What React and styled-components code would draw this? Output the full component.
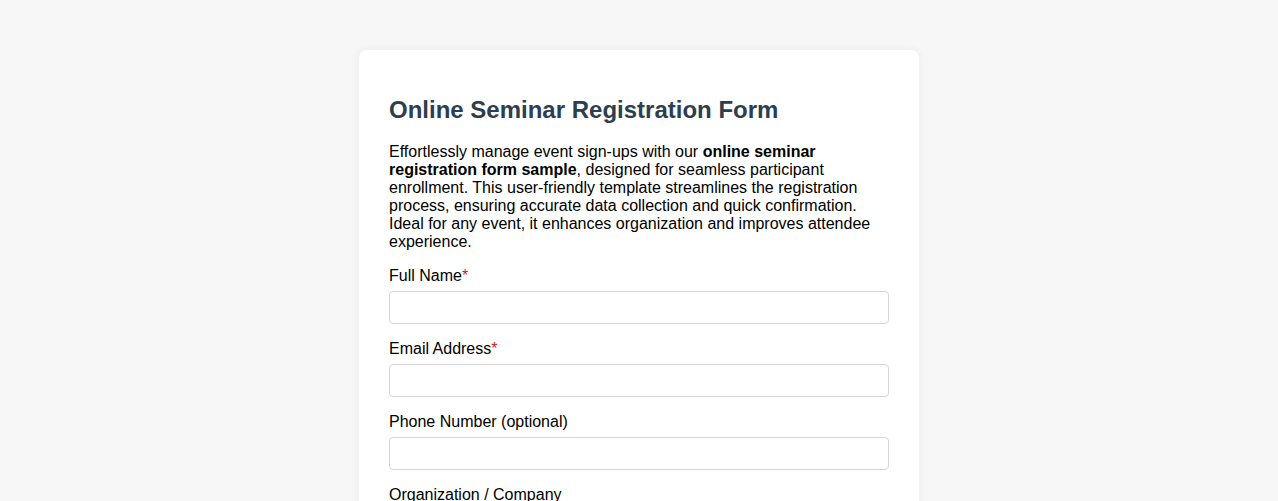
import React from "react";
import styled, { createGlobalStyle } from "styled-components";

const GlobalStyle = createGlobalStyle`
  body {
    margin: 0;
    background-color: #f7f7f7;
    font-family: "Liberation Sans", Arial, sans-serif;
  }
`;

const Page = styled.div`
  padding: 50px 0;
`;

const Card = styled.form`
  width: 500px;
  margin: 0 auto;
  padding: 30px;
  background-color: #fff;
  border-radius: 8px;
  box-shadow: 0 0 8px rgba(0, 0, 0, 0.06);
`;

const Title = styled.h2`
  margin: 16px 0 19px;
  font-size: 24px;
  line-height: 28px;
  font-weight: bold;
  color: #2c3e50;
`;

const Intro = styled.p`
  margin: 0 0 16px;
  font-size: 16px;
  line-height: 18px;
  color: #000;
`;

const Field = styled.div`
  margin-bottom: 16px;
`;

const Label = styled.label`
  display: block;
  margin-bottom: 6px;
  font-size: 16px;
  line-height: 18px;
  color: #000;
`;

const Required = styled.span`
  color: #e0102a;
`;

const Input = styled.input`
  display: block;
  box-sizing: border-box;
  width: 100%;
  height: 33px;
  padding: 8px;
  border: 1px solid #d6d6d6;
  border-radius: 4px;
  font-family: inherit;
  font-size: 14px;
`;

const fields = [
  { label: "Full Name", type: "text", required: true },
  { label: "Email Address", type: "email", required: true },
  { label: "Phone Number (optional)", type: "tel" },
  { label: "Organization / Company", type: "text" },
];

const App = () => (
  <>
    <GlobalStyle />
    <Page>
      <Card onSubmit={(e) => e.preventDefault()}>
        <Title>Online Seminar Registration Form</Title>
        <Intro>
          Effortlessly manage event sign-ups with our <b>online seminar registration form sample</b>, designed
          for seamless participant enrollment. This user-friendly template streamlines the registration process,
          ensuring accurate data collection and quick confirmation. Ideal for any event, it enhances organization
          and improves attendee experience.
        </Intro>
        {fields.map((f) => (
          <Field key={f.label}>
            <Label>
              {f.label}
              {f.required && <Required>*</Required>}
            </Label>
            <Input type={f.type} />
          </Field>
        ))}
      </Card>
    </Page>
  </>
);

export default App;
